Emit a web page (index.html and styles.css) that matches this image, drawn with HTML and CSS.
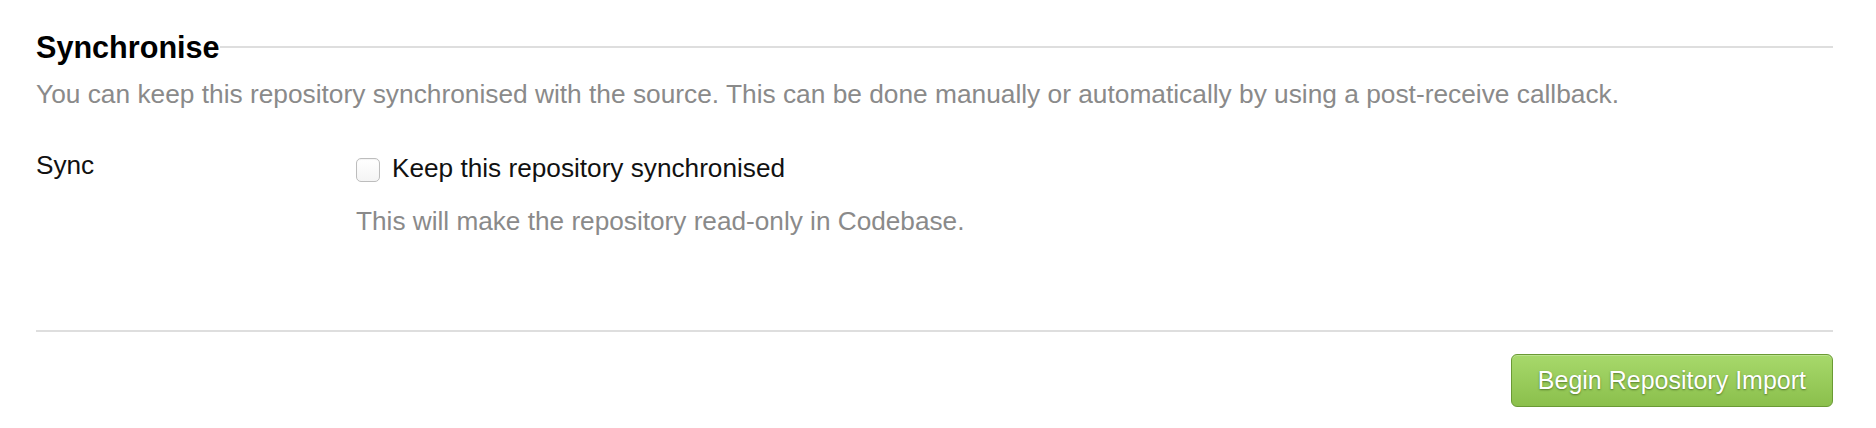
FILE: index.html
```html
<!DOCTYPE html>
<html lang="en">
<head>
    <meta charset="UTF-8">
    <meta name="viewport" content="width=device-width, initial-scale=1.0">
    <title>Import Repository</title>
    <link rel="stylesheet" href="styles.css">
</head>
<body>

    <div class="page">
        <!-- Synchronise section -->
        <div class="section-head">
            <h2>Synchronise</h2>
            <div class="section-rule"></div>
        </div>
        <p class="section-desc">You can keep this repository synchronised with the source. This can be done manually or automatically by using a post-receive callback.</p>

        <div class="form-row">
            <label class="row-label" for="sync">Sync</label>
            <div class="row-field">
                <div class="check-line">
                    <input type="checkbox" id="sync" class="check">
                    <label for="sync">Keep this repository synchronised</label>
                </div>
                <p class="hint">This will make the repository read-only in Codebase.</p>
            </div>
        </div>

        <div class="actions">
            <button type="submit" class="btn-green">Begin Repository Import</button>
        </div>
    </div>

</body>
</html>
```

FILE: styles.css
```css
body {
    margin: 0;
    font-family: 'Liberation Sans', Arial, sans-serif;
    font-size: 26.2px;
    line-height: 30px;
    color: #111;
    background: #fff;
}
.page {
    padding: 29px 43px 0 36px;
}
.section-head {
    display: flex;
    align-items: center;
}
.section-head h2 {
    margin: 0;
    font-size: 30.6px;
    line-height: 36px;
    font-weight: bold;
    color: #000;
}
.section-rule {
    flex: 1;
    height: 2px;
    background: #dedede;
}
.section-desc {
    margin: 14px 0 0;
    font-size: 26.3px;
    color: #8a8a8a;
}
.form-row {
    display: flex;
    margin-top: 41px;
}
.row-label {
    width: 320px;
    flex-shrink: 0;
}
.row-field {
    padding-top: 3px;
}
.check-line {
    display: flex;
    align-items: flex-start;
    gap: 12px;
}
.check {
    appearance: none;
    -webkit-appearance: none;
    width: 24px;
    height: 24px;
    margin: 5px 0 0;
    border: 1px solid #bdbdbd;
    border-radius: 5px;
    background: linear-gradient(#fff, #f4f4f4);
    box-shadow: inset 0 1px 1px rgba(0,0,0,0.05);
}
.hint {
    margin: 23px 0 0;
    color: #8a8a8a;
}
.actions {
    margin-top: 94px;
    border-top: 2px solid #dedede;
    padding-top: 22px;
    display: flex;
    justify-content: flex-end;
}
.btn-green {
    height: 53px;
    padding: 0 26px;
    font-family: inherit;
    font-size: 25px;
    line-height: 51px;
    color: #fff;
    text-shadow: 0 1px 2px rgba(40,70,10,0.6);
    background: linear-gradient(#a7d96b, #8bbf4c);
    border: 1px solid #6a9a34;
    border-radius: 6px;
    box-shadow: inset 0 1px 0 rgba(255,255,255,0.25);
    cursor: pointer;
}
```
